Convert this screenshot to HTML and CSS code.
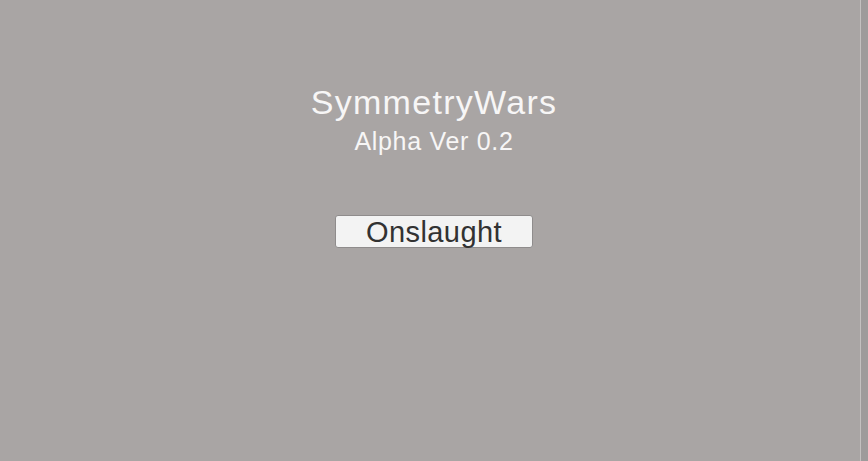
FILE: index.html
```html
<!DOCTYPE html>
<html>
<head>
<meta charset="utf-8">
<link rel="stylesheet" href="styles.css">
</head>
<body>
<main class="menu">
  <h1 class="title">SymmetryWars</h1>
  <p class="version">Alpha Ver 0.2</p>
  <button class="mode-button">Onslaught</button>
</main>
<div class="edge"></div>
</body>
</html>
```
FILE: styles.css
```css
html, body {
  margin: 0;
  padding: 0;
  width: 868px;
  height: 461px;
  overflow: hidden;
}
body {
  background: #a9a5a4;
  font-family: "Liberation Sans", Arial, sans-serif;
  position: relative;
}
.menu {
  display: flex;
  flex-direction: column;
  align-items: center;
  padding-top: 83px;
}
.title {
  margin: 0;
  font-weight: normal;
  font-size: 34px;
  line-height: 38px;
  letter-spacing: 1.3px;
  color: #f7f6f6;
}
.version {
  margin: 6px 0 0 0;
  font-size: 25px;
  line-height: 28px;
  letter-spacing: 0.7px;
  color: #f7f6f6;
}
.mode-button {
  margin-top: 60px;
  width: 198px;
  height: 33px;
  box-sizing: border-box;
  padding: 2px 0 0 0;
  border: 1px solid #8f8c8c;
  border-radius: 3px;
  background: #f3f3f3;
  color: #323232;
  font-family: "Liberation Sans", Arial, sans-serif;
  font-size: 29px;
  line-height: 29px;
  letter-spacing: 0.4px;
}
.edge {
  position: absolute;
  top: 0;
  right: 0;
  width: 7px;
  height: 461px;
  background: #9e9b9b;
  border-left: 1px solid #c3c0bf;
}
```
